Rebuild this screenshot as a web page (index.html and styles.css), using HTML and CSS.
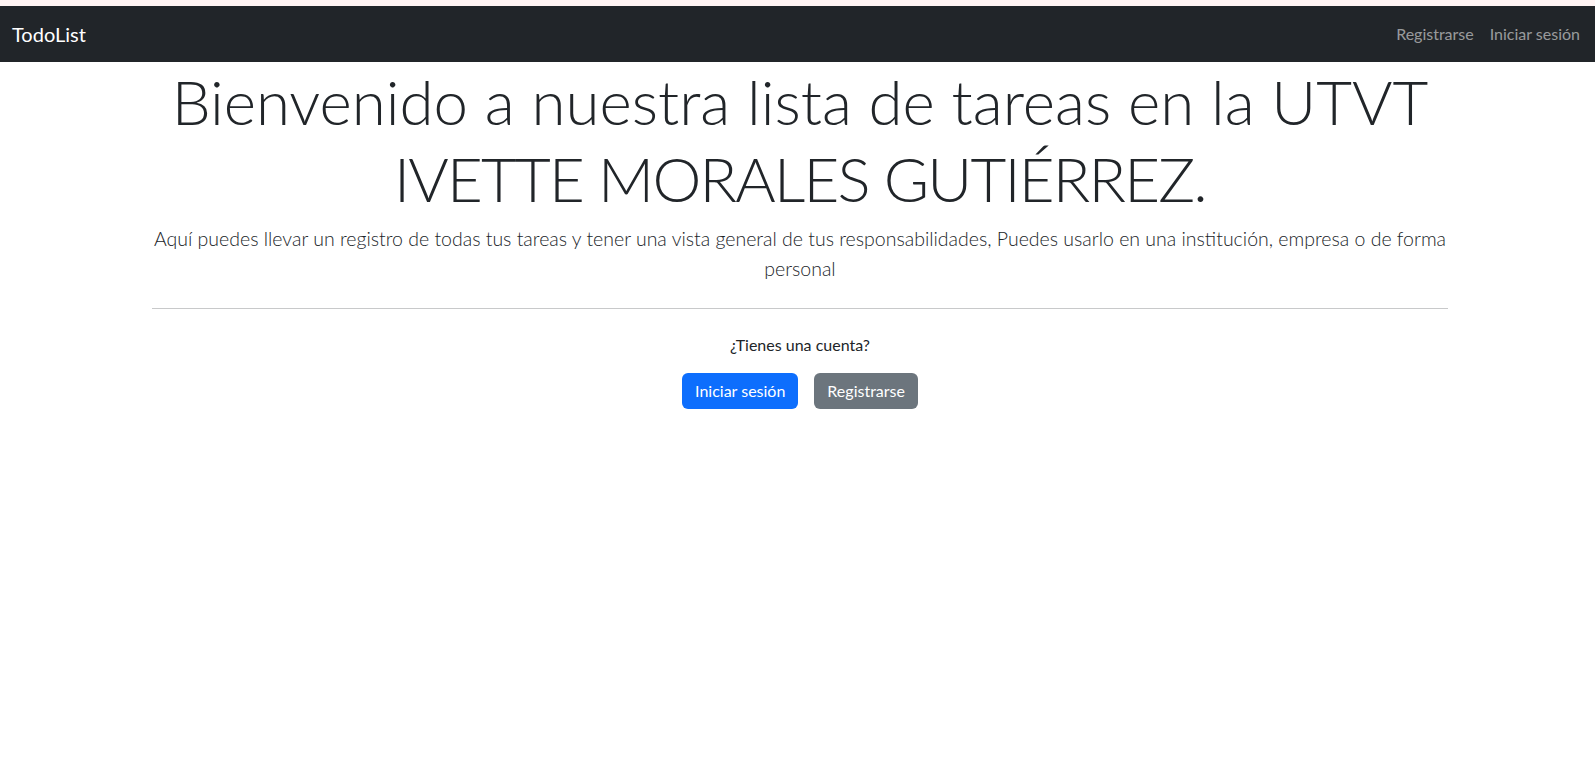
FILE: index.html
```html
<!DOCTYPE html>
<html lang="es">
<head>
<meta charset="utf-8">
<title>TodoList</title>
<link rel="stylesheet" href="styles.css">
</head>
<body>
<div class="page">
  <div class="topstrip"></div>
  <nav class="navbar">
    <a class="brand" href="#">TodoList</a>
    <ul class="nav-links">
      <li><a href="#">Registrarse</a></li>
      <li><a href="#">Iniciar sesión</a></li>
    </ul>
  </nav>
  <main class="container">
    <h1 class="display">Bienvenido a nuestra lista de tareas en la UTVT<br><span class="display-name">IVETTE MORALES GUTIÉRREZ.</span></h1>
    <p class="lead">Aquí puedes llevar un registro de todas tus tareas y tener una vista general de tus responsabilidades, Puedes usarlo en una institución, empresa o de forma<br>personal</p>
    <hr class="divider">
    <div class="account">
      <p class="account-q">¿Tienes una cuenta?</p>
      <div class="actions">
        <a class="btn btn-primary" href="#">Iniciar sesión</a>
        <a class="btn btn-secondary" href="#">Registrarse</a>
      </div>
    </div>
  </main>
</div>
</body>
</html>
```
FILE: styles.css
```css
html { overflow-x: hidden; }
body {
  margin: 0;
  font-family: Lato, "Open Sans", sans-serif;
  color: #212529;
  background: #fff;
}
.page { width: 1600px; }
.topstrip { height: 6px; background: #fff4f4; }
.navbar {
  height: 56px;
  background: #212529;
  display: flex;
  align-items: center;
  justify-content: space-between;
  padding: 0 12px;
}
.brand {
  color: #fff;
  font-size: 20px;
  line-height: 30px;
  text-decoration: none;
}
.nav-links {
  list-style: none;
  margin: 0;
  padding: 0;
  display: flex;
}
.nav-links a {
  display: block;
  padding: 8px;
  color: rgba(255,255,255,.55);
  text-decoration: none;
  font-size: 16px;
  line-height: 24px;
}
.container {
  width: 1296px;
  margin: 0 auto;
  text-align: center;
}
.display {
  font-size: 61.8px;
  font-weight: 300;
  line-height: 77px;
  white-space: nowrap;
  margin: 1px 0 7px;
}
.display-name { letter-spacing: -1.8px; }
.lead {
  font-size: 19.5px;
  font-weight: 300;
  line-height: 30px;
  white-space: nowrap;
  margin: 0 0 24px;
}
.divider {
  border: 0;
  border-top: 1px solid #c8c9ca;
  margin: 16px 0;
}
.account { padding-top: 8px; }
.account-q { margin: 0 0 16px; font-size: 16px; line-height: 24px; }
.actions { display: flex; justify-content: center; gap: 16px; }
.btn {
  display: inline-block;
  padding: 6px 13px;
  font-size: 16px;
  line-height: 24px;
  border-radius: 6px;
  color: #fff;
  text-decoration: none;
}
.btn-primary { background: #0d6efd; }
.btn-secondary { background: #6c757d; }
```
